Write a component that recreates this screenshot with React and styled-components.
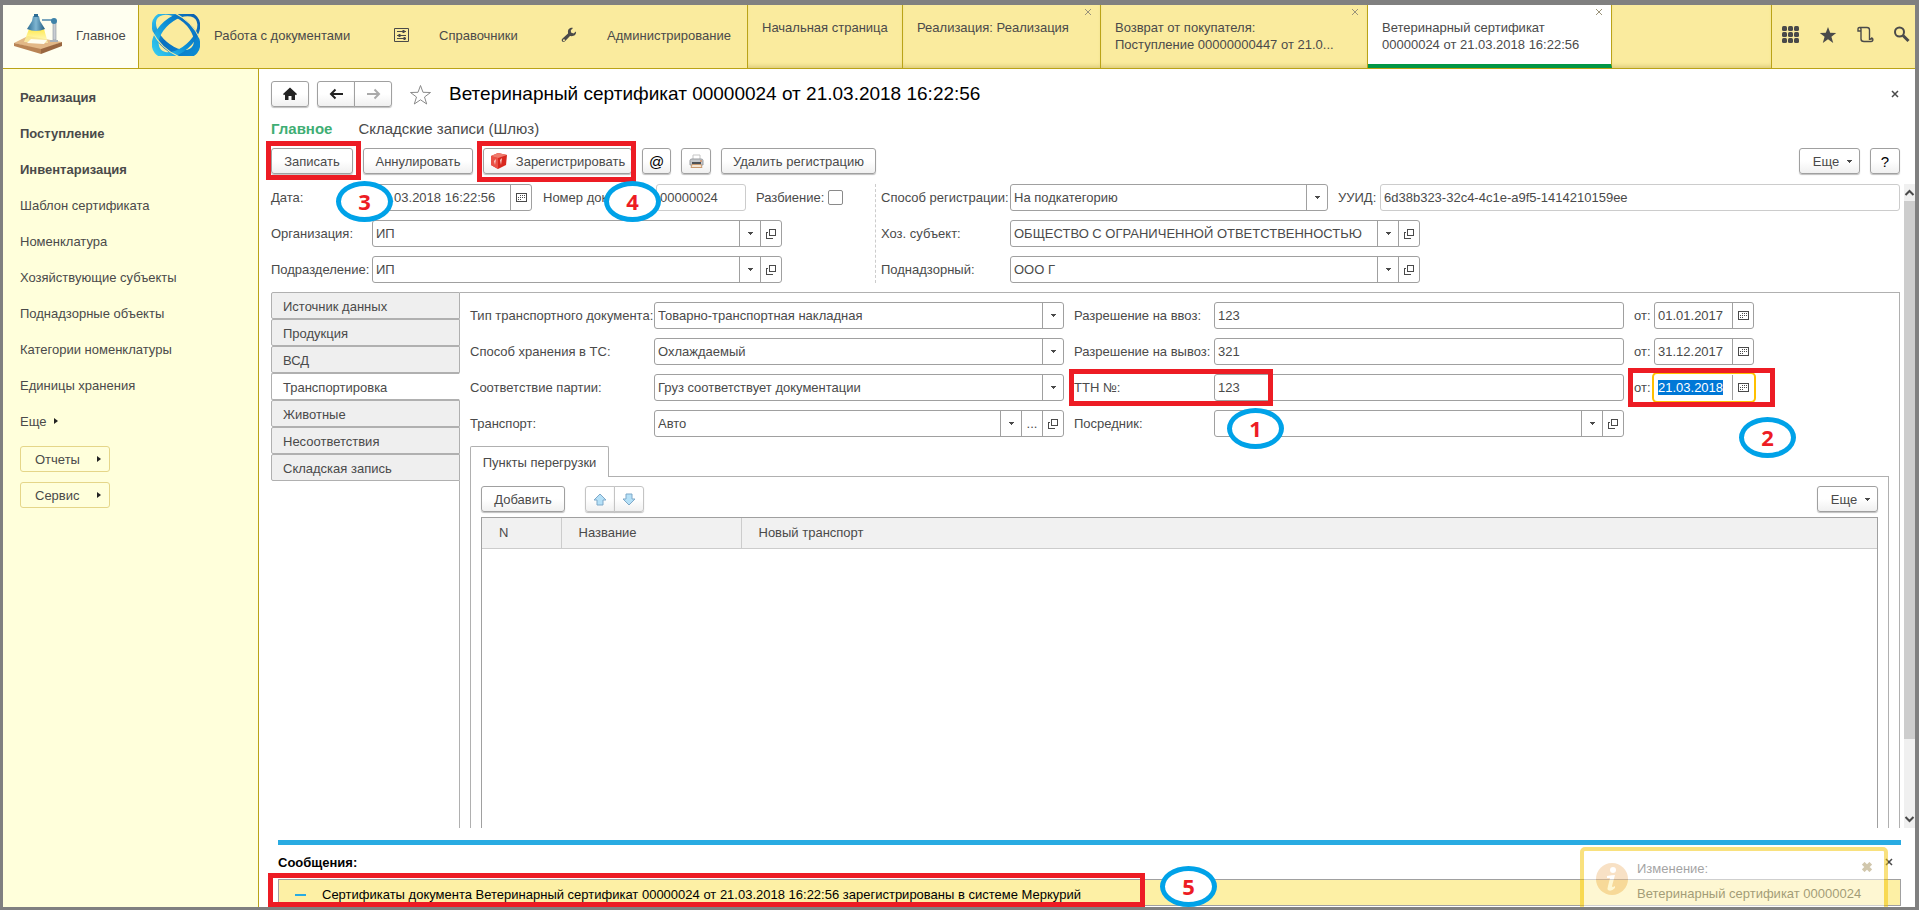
import React, { useEffect, useRef } from "react";
import styled, { createGlobalStyle, css } from "styled-components";

const sections = ["Реализация", "Поступление", "Инвентаризация"];

const links = [
  "Шаблон сертификата",
  "Номенклатура",
  "Хозяйствующие субъекты",
  "Поднадзорные объекты",
  "Категории номенклатуры",
  "Единицы хранения",
];

const docTabs = [
  { id: 1, lines: ["Начальная страница"], width: 155 },
  { id: 2, lines: ["Реализация: Реализация"], width: 198, closable: true },
  {
    id: 3,
    lines: ["Возврат от покупателя:", "Поступление 00000000447 от 21.0..."],
    width: 267,
    closable: true,
  },
  {
    id: 4,
    lines: ["Ветеринарный сертификат", "00000024 от 21.03.2018 16:22:56"],
    width: 244,
    closable: true,
    active: true,
  },
];

const sideTabs = [
  "Источник данных",
  "Продукция",
  "ВСД",
  "Транспортировка",
  "Животные",
  "Несоответствия",
  "Складская запись",
];

/* ---------- icons ---------- */

const LampIcon = () => (
  <svg width="50" height="42" viewBox="0 0 50 42">
    <defs>
      <linearGradient id="light" x1="0" y1="0" x2="0" y2="1">
        <stop offset="0" stopColor="#ffe94a" />
        <stop offset="1" stopColor="#fff8b8" stopOpacity="0.7" />
      </linearGradient>
      <linearGradient id="shade" x1="0" y1="0" x2="1" y2="0">
        <stop offset="0" stopColor="#2c6c93" />
        <stop offset="0.5" stopColor="#7fb6d2" />
        <stop offset="1" stopColor="#1f5a80" />
      </linearGradient>
    </defs>
    <path d="M1 29 L15 22 L49 28 L28 36 Z" fill="#e2b887" />
    <path d="M1 29 L28 35 L28 40 L1 32 Z" fill="#b98455" />
    <path d="M28 35 L49 28 L49 32 L28 40 Z" fill="#9a6740" />
    <path d="M40 8 h3 v18 h-3 z" fill="#c9ced3" stroke="#8c949b" strokeWidth="0.6" />
    <path d="M37 26 h8 v2 h-8 z" fill="#aab1b8" />
    <path d="M29 6 L41 6" stroke="#7aa5bd" strokeWidth="2" />
    <path d="M16 15 L31 15 L35 29 L11 28 Z" fill="url(#light)" />
    <path d="M18 25 L34 26 L31 30 L14 29 Z" fill="#fffef0" />
    <path d="M20 2 h6 l1 5 l5 8 q-9 4 -18 0 l5 -8 z" fill="url(#shade)" />
    <path d="M21 0 h4 v3 h-4 z" fill="#2c6c93" />
    <circle cx="41" cy="7" r="3" fill="#3d83a9" />
  </svg>
);

const OrbitLogo = () => (
  <svg width="48" height="42" viewBox="0 0 48 42">
    <defs>
      <linearGradient id="orbit" x1="0" y1="0" x2="1" y2="0">
        <stop offset="0" stopColor="#2fc0ee" />
        <stop offset="0.4" stopColor="#0a6fc0" />
        <stop offset="1" stopColor="#0b8ad2" />
      </linearGradient>
      <linearGradient id="orbitBack" x1="0" y1="0" x2="1" y2="0">
        <stop offset="0" stopColor="#35c9ee" />
        <stop offset="0.5" stopColor="#0b8fd6" />
        <stop offset="1" stopColor="#0a5fb0" />
      </linearGradient>
    </defs>
    <path
      d="M-28 0 A28 18 0 1 1 28 0 A28 18 0 1 1 -28 0 Z M-25 -1 A22 12 0 1 0 20 -1 A22 13 0 1 0 -25 -1 Z"
      transform="translate(24 21) rotate(41)"
      fill="url(#orbit)"
      fillRule="evenodd"
    />
    <path
      d="M-28 0 A28 18 0 1 1 28 0 A28 18 0 1 1 -28 0 Z M-21 1 A22 12 0 1 0 25 1 A22 13 0 1 0 -21 1 Z"
      transform="translate(24 21) rotate(-41)"
      fill="url(#orbitBack)"
      fillRule="evenodd"
    />
    <path
      d="M-20 -14 Q0 -22 20 -13 M-20 13 Q0 21 20 13"
      transform="translate(24 21) rotate(41)"
      fill="none"
      stroke="#faeb9e"
    />
  </svg>
);

const SlidersIcon = () => (
  <svg width="15" height="14" viewBox="0 0 15 14" fill="none" stroke="#4a4a4a">
    <path d="M.5 .5h14v13h-14z M3 3.500h9 M3 7.500h9 M3 10.500h9" />
    <path d="M9.500 2v3 M5.500 6v3 M10.500 9v3" strokeWidth="2" />
  </svg>
);

const WrenchIcon = () => (
  <svg width="16" height="16" viewBox="0 0 16 16">
    <path
      d="M15 4.500 L12.500 6.500 L10 5.500 L9.800 3.200 L12 1 C9.500 .3 6.500 2 7 5.500 L7 6.500 L1 12 C0 13.500 1.500 15.800 3.500 14.800 L9 9 C12.500 9.700 15.500 8 15 4.500 Z M3 12.200 a1 1 0 1 1 -.1 0z"
      fill="#4a4a4a"
      fillRule="evenodd"
    />
  </svg>
);

const GridIcon = () => (
  <svg width="18" height="18" viewBox="0 0 18 18" fill="#4a4a4a">
    {[0, 6, 12].map((y) =>
      [0, 6, 12].map((x) => <rect key={`${x}-${y}`} x={x} y={y} width="5" height="5" rx="1.500" />)
    )}
  </svg>
);

const StarIcon = () => (
  <svg width="18" height="18" viewBox="0 0 18 18">
    <path d="M9 1l2.200 5.800 6 .2-4.800 3.700L14.200 17 9 13.300 3.800 17l1.800-6.300L.8 7l6-.2z" fill="#4a4a4a" />
  </svg>
);

const ScrollIcon = () => (
  <svg width="17" height="17" viewBox="0 0 17 17" fill="none" stroke="#4a4a4a" strokeWidth="1.400">
    <path d="M3.500 5 H1 V3 C1 1 4 1 4 3 V13 C4 15 5 15.500 7 15.500 H14 C16.500 15.500 16.500 12 14 12 M2.500 1.500 H10 C12 1.500 12.500 3 12.500 4 V14 M14 12 V14" />
  </svg>
);

const SearchIcon = () => (
  <svg width="17" height="17" viewBox="0 0 17 17" fill="none" stroke="#4a4a4a">
    <circle cx="6.500" cy="6" r="4.500" strokeWidth="2" />
    <path d="M10 9.500 L15.500 15" strokeWidth="3" />
  </svg>
);

const HomeIcon = () => (
  <svg width="16" height="14" viewBox="0 0 16 14">
    <path d="M8 0.500 L15 7 L14 8.200 L13 7.500 V13 H9.500 V9 H6.500 V13 H3 V7.500 L2 8.200 L1 7 Z" fill="#222" />
  </svg>
);

const ArrowIcon = ({ flip, color }) => (
  <svg width="15" height="12" viewBox="0 0 15 12">
    <path
      d={flip ? "M1 6 H13 M8.500 1.500 L13 6 L8.500 10.500" : "M14 6 H2 M6.500 1.500 L2 6 L6.500 10.500"}
      fill="none"
      stroke={color}
      strokeWidth="2"
    />
  </svg>
);

const FavouriteIcon = () => (
  <svg width="23" height="21" viewBox="0 0 23 21">
    <path
      d="M11.500 1.500l2.500 6.800 7.500.2-6 4.500 2.200 7-6.200-4.200L5.300 20l2.200-7-6-4.500 7.500-.2z"
      fill="none"
      stroke="#8a8a8a"
    />
  </svg>
);

const CubeIcon = () => (
  <svg width="18" height="17" viewBox="0 0 18 17">
    <path d="M1 3 L8 0 L17 2 L16 12 L8 16 L1 12 Z" fill="#d8281e" />
    <path d="M1 3 L8 5 L8 16 L1 12 Z" fill="#ea5146" />
    <path d="M1 3 L8 0 L17 2 L8 5 Z" fill="#f07a6c" />
    <path d="M10 7 L12 5 L11 12 Z M4 8 L6 6 L5 12 Z" fill="#fbd0c8" />
  </svg>
);

const PrinterIcon = () => (
  <svg width="15" height="15" viewBox="0 0 15 15">
    <path d="M4 1h7v6H4z" fill="#fff" stroke="#c5c5c5" />
    <path d="M1 6.500 Q1 5 3 5 h9 Q14 5 14 6.500 V11 H1z" fill="#c6c8cb" stroke="#9a9da1" />
    <path d="M3 8h9v2H3z" fill="#4e5257" />
    <path d="M3 10.500h9l1 3H2z" fill="#f5e6d4" stroke="#c99a70" />
    <path d="M11 6.500h2v1h-2z" fill="#e07a3b" />
  </svg>
);

const CalendarIcon = () => (
  <svg width="11" height="9" viewBox="0 0 11 9" shapeRendering="crispEdges">
    <path d="M.5 .5h10v8h-10z" fill="none" stroke="#4a4a4a" />
    <path
      d="M4 2h1v1H4zM6 2h1v1H6zM8 2h1v1H8zM2 4h1v1H2zM4 4h1v1H4zM6 4h1v1H6zM8 4h1v1H8zM2 6h1v1H2zM4 6h1v1H4z"
      fill="#4a4a4a"
    />
  </svg>
);

const OpenIcon = () => (
  <svg width="10" height="10" viewBox="0 0 10 10" fill="none" stroke="#4a4a4a" shapeRendering="crispEdges">
    <path d="M3.500 .5h6v6h-6z M1.500 3.500h-1v6h6v-1" />
  </svg>
);

const CaretIcon = () => (
  <svg width="5" height="3" viewBox="0 0 5 3" shapeRendering="crispEdges">
    <path d="M0 0h5v1H4v1H3v1H2V2H1V1H0z" fill="#4a4a4a" />
  </svg>
);

const CaretRightIcon = () => (
  <svg width="4" height="6" viewBox="0 0 4 6">
    <path d="M0 0l4 3-4 3z" fill="#222" />
  </svg>
);

const CloseIcon = ({ size = 8, color = "#4a4a4a", weight = 1.5 }) => (
  <svg width={size} height={size} viewBox="0 0 8 8">
    <path d="M1 1l6 6M7 1L1 7" stroke={color} strokeWidth={weight} fill="none" />
  </svg>
);

const MoveIcon = ({ down }) => (
  <svg width="14" height="13" viewBox="0 0 14 13">
    <path
      d={down ? "M4 1h6v5h3L7 12 1 6h3z" : "M4 12h6V7h3L7 1 1 7h3z"}
      fill="#b5e0f7"
      stroke="#7fa9c9"
    />
  </svg>
);

const ChevronIcon = ({ down }) => (
  <svg width="11" height="7" viewBox="0 0 11 7">
    <path d={down ? "M1.500 1l4 4 4-4" : "M1.500 6l4-4 4 4"} stroke="#4a4a4a" strokeWidth="2" fill="none" />
  </svg>
);

const InfoIcon = () => (
  <svg width="32" height="32" viewBox="0 0 32 32">
    <circle cx="16" cy="16" r="16" fill="#f3c48c" />
    <circle cx="17" cy="7" r="3" fill="#fff" />
    <path d="M11 13q5-1 8-1l-3 11q0 2 3 0v2q-4 4-7 2-1-1 0-4l2-8h-3z" fill="#fff" />
  </svg>
);

/* ---------- form parts ---------- */

const SelectField = ({ id, value, buttons = [] }) => (
  <Field>
    <SelectWrap>
      <Select id={id} defaultValue={value}>
        <option>{value}</option>
      </Select>
      <SelectArrow>
        <CaretIcon />
      </SelectArrow>
    </SelectWrap>
    {buttons.includes("choose") && (
      <FieldButton type="button" aria-label="Выбрать">
        ...
      </FieldButton>
    )}
    {buttons.includes("open") && (
      <FieldButton type="button" aria-label="Открыть">
        <OpenIcon />
      </FieldButton>
    )}
  </Field>
);

const DateField = ({ id, value, focused }) => {
  const input = useRef(null);

  useEffect(() => {
    if (focused && input.current) {
      input.current.focus();
      input.current.select();
    }
  }, [focused]);

  return (
    <Field $focused={focused}>
      <TextInput id={id} ref={input} defaultValue={value} />
      <FieldButton type="button" aria-label="Календарь">
        <CalendarIcon />
      </FieldButton>
    </Field>
  );
};

const App = () => {
  return (
    <>
      <GlobalStyle />
      <Window>
        <Header>
          <HomeSection href="#main">
            <LampIcon />
            Главное
          </HomeSection>
          <SectionNav>
            <SectionLink href="#docs" $width={242} $gap={14}>
              <OrbitLogo />
              Работа с документами
            </SectionLink>
            <SectionLink href="#catalogs" $width={167} $gap={30}>
              <SlidersIcon />
              Справочники
            </SectionLink>
            <SectionLink href="#admin" $width={173} $gap={30}>
              <WrenchIcon />
              Администрирование
            </SectionLink>
          </SectionNav>
          {docTabs.map((tab) => (
            <DocTab key={tab.id} $width={tab.width} $active={tab.active}>
              {tab.lines.map((line) => (
                <span key={line}>{line}</span>
              ))}
              {tab.closable && (
                <TabClose type="button" aria-label="Закрыть">
                  <CloseIcon color="#9a937a" weight={1} />
                </TabClose>
              )}
            </DocTab>
          ))}
          <TabFiller />
          <HeaderTools>
            <PlainButton type="button" aria-label="Меню">
              <GridIcon />
            </PlainButton>
            <PlainButton type="button" aria-label="Избранное">
              <StarIcon />
            </PlainButton>
            <PlainButton type="button" aria-label="История">
              <ScrollIcon />
            </PlainButton>
            <PlainButton type="button" aria-label="Поиск">
              <SearchIcon />
            </PlainButton>
          </HeaderTools>
        </Header>

        <Body>
          <Sidebar>
            {sections.map((item) => (
              <SideLink key={item} href="#section" $bold>
                {item}
              </SideLink>
            ))}
            {links.map((item) => (
              <SideLink key={item} href="#link">
                {item}
              </SideLink>
            ))}
            <SideLink href="#more">
              Еще <CaretRightIcon />
            </SideLink>
            <SideButton type="button">
              Отчеты <CaretRightIcon />
            </SideButton>
            <SideButton type="button">
              Сервис <CaretRightIcon />
            </SideButton>
          </Sidebar>

          <Main>
            <TitleRow>
              <Button type="button" $width={38} aria-label="Домой">
                <HomeIcon />
              </Button>
              <ButtonGroup>
                <Button type="button" $width={38} aria-label="Назад">
                  <ArrowIcon color="#222" />
                </Button>
                <Button type="button" $width={38} aria-label="Вперед">
                  <ArrowIcon color="#aaa" flip />
                </Button>
              </ButtonGroup>
              <PlainButton type="button" aria-label="В избранное">
                <FavouriteIcon />
              </PlainButton>
              <Title>Ветеринарный сертификат 00000024 от 21.03.2018 16:22:56</Title>
              <PlainButton type="button" aria-label="Закрыть форму">
                <CloseIcon />
              </PlainButton>
            </TitleRow>

            <FormNav>
              <FormNavLink href="#form" $active>
                Главное
              </FormNavLink>
              <FormNavLink href="#stock">Складские записи (Шлюз)</FormNavLink>
            </FormNav>

            <Toolbar>
              <Anchor>
                <Button type="button" $width={82}>
                  Записать
                </Button>
                <RedFrame $top={-7} $left={-5} $right={-8} $bottom={-5} />
              </Anchor>
              <Button type="button" $width={110}>
                Аннулировать
              </Button>
              <Anchor>
                <Button type="button" $width={149}>
                  <CubeIcon />
                  Зарегистрировать
                </Button>
                <RedFrame $top={-7} $left={-6} $right={-4} $bottom={-7} />
              </Anchor>
              <Button type="button" $width={29} $dark>
                @
              </Button>
              <Button type="button" $width={30} aria-label="Печать">
                <PrinterIcon />
              </Button>
              <Button type="button" $width={155}>
                Удалить регистрацию
              </Button>
              <Spacer />
              <Button type="button" $width={61} $menu>
                Еще <CaretIcon />
              </Button>
              <Button type="button" $width={30} $dark>
                ?
              </Button>
            </Toolbar>

            <ScrollArea>
              <Form>
                <DocFields>
                  <LeftFields>
                    <FieldRow>
                      <Label htmlFor="date" $width={101}>
                        Дата:
                      </Label>
                      <Sized $width={160}>
                        <DateField id="date" value="21.03.2018 16:22:56" />
                        <Badge $left={-36} $top={-3}>
                          3
                        </Badge>
                      </Sized>
                      <Label htmlFor="number" $width={113} $indent={11}>
                        Номер документа:
                      </Label>
                      <Sized $width={90}>
                        <Field $readOnly>
                          <TextInput id="number" defaultValue="00000024" readOnly />
                        </Field>
                        <Badge $left={-52} $top={-3}>
                          4
                        </Badge>
                      </Sized>
                      <Label htmlFor="split" $width={72} $indent={10}>
                        Разбиение:
                      </Label>
                      <Checkbox id="split" type="checkbox" />
                    </FieldRow>
                    <FieldRow>
                      <Label htmlFor="org" $width={101}>
                        Организация:
                      </Label>
                      <Sized $width={410}>
                        <SelectField id="org" value="ИП" buttons={["open"]} />
                      </Sized>
                    </FieldRow>
                    <FieldRow>
                      <Label htmlFor="dept" $width={101}>
                        Подразделение:
                      </Label>
                      <Sized $width={410}>
                        <SelectField id="dept" value="ИП" buttons={["open"]} />
                      </Sized>
                    </FieldRow>
                  </LeftFields>
                  <RightFields>
                    <FieldRow>
                      <Label htmlFor="method" $width={129}>
                        Способ регистрации:
                      </Label>
                      <Sized $width={318}>
                        <SelectField id="method" value="На подкатегорию" />
                      </Sized>
                      <Label htmlFor="uuid" $width={42} $indent={10}>
                        УУИД:
                      </Label>
                      <Field $readOnly>
                        <TextInput id="uuid" defaultValue="6d38b323-32c4-4c1e-a9f5-1414210159ee" readOnly />
                      </Field>
                    </FieldRow>
                    <FieldRow>
                      <Label htmlFor="subject" $width={129}>
                        Хоз. субъект:
                      </Label>
                      <Sized $width={410}>
                        <SelectField
                          id="subject"
                          value="ОБЩЕСТВО С ОГРАНИЧЕННОЙ ОТВЕТСТВЕННОСТЬЮ"
                          buttons={["open"]}
                        />
                      </Sized>
                    </FieldRow>
                    <FieldRow>
                      <Label htmlFor="supervised" $width={129}>
                        Поднадзорный:
                      </Label>
                      <Sized $width={410}>
                        <SelectField id="supervised" value="ООО Г" buttons={["open"]} />
                      </Sized>
                    </FieldRow>
                  </RightFields>
                </DocFields>

                <Pages>
                  <SideTabs>
                    {sideTabs.map((tab) => (
                      <SideTab key={tab} type="button" $active={tab === "Транспортировка"}>
                        {tab}
                      </SideTab>
                    ))}
                    <SideTabsRest />
                  </SideTabs>
                  <Page>
                    <TransportGrid>
                      <Label htmlFor="doctype">Тип транспортного документа:</Label>
                      <SelectField id="doctype" value="Товарно-транспортная накладная" />
                      <Label htmlFor="import" $indent={10}>
                        Разрешение на ввоз:
                      </Label>
                      <Field>
                        <TextInput id="import" defaultValue="123" />
                      </Field>
                      <Label htmlFor="importDate" $indent={10}>
                        от:
                      </Label>
                      <DateField id="importDate" value="01.01.2017" />

                      <Label htmlFor="storage">Способ хранения в ТС:</Label>
                      <SelectField id="storage" value="Охлаждаемый" />
                      <Label htmlFor="export" $indent={10}>
                        Разрешение на вывоз:
                      </Label>
                      <Field>
                        <TextInput id="export" defaultValue="321" />
                      </Field>
                      <Label htmlFor="exportDate" $indent={10}>
                        от:
                      </Label>
                      <DateField id="exportDate" value="31.12.2017" />

                      <Label htmlFor="match">Соответствие партии:</Label>
                      <SelectField id="match" value="Груз соответствует документации" />
                      <Label htmlFor="ttn" $indent={10}>
                        ТТН №:
                      </Label>
                      <Anchor>
                        <Field>
                          <TextInput id="ttn" defaultValue="123" />
                        </Field>
                        <RedFrame $top={-5} $left={-145} $bottom={-5} $width={204} />
                      </Anchor>
                      <Label htmlFor="ttnDate" $indent={10}>
                        от:
                      </Label>
                      <Anchor>
                        <DateField id="ttnDate" value="21.03.2018" focused />
                        <RedFrame $top={-6} $left={-26} $right={-21} $bottom={-6} />
                        <Badge $left={85} $top={43}>
                          2
                        </Badge>
                      </Anchor>

                      <Label htmlFor="vehicle">Транспорт:</Label>
                      <SelectField id="vehicle" value="Авто" buttons={["choose", "open"]} />
                      <Label htmlFor="agent" $indent={10}>
                        Посредник:
                      </Label>
                      <Anchor>
                        <SelectField id="agent" value="" buttons={["open"]} />
                        <Badge $left={13} $top={-2}>
                          1
                        </Badge>
                      </Anchor>
                    </TransportGrid>

                    <InnerTabs>
                      <InnerTab type="button">Пункты перегрузки</InnerTab>
                      <InnerTabsRest />
                    </InnerTabs>
                    <InnerPage>
                      <TableTools>
                        <Button type="button" $width={84}>
                          Добавить
                        </Button>
                        <ButtonGroup $soft>
                          <Button type="button" $width={30} aria-label="Вверх">
                            <MoveIcon />
                          </Button>
                          <Button type="button" $width={30} aria-label="Вниз">
                            <MoveIcon down />
                          </Button>
                        </ButtonGroup>
                        <Spacer />
                        <Button type="button" $width={61} $menu>
                          Еще <CaretIcon />
                        </Button>
                      </TableTools>
                      <TableBox>
                        <Table>
                          <thead>
                            <tr>
                              <Th $width={79}>N</Th>
                              <Th $width={180}>Название</Th>
                              <Th>Новый транспорт</Th>
                            </tr>
                          </thead>
                        </Table>
                      </TableBox>
                    </InnerPage>
                  </Page>
                </Pages>
              </Form>
              <Scrollbar>
                <ScrollEnd>
                  <ChevronIcon />
                </ScrollEnd>
                <ScrollThumb />
                <ScrollTrack />
                <ScrollEnd>
                  <ChevronIcon down />
                </ScrollEnd>
              </Scrollbar>
            </ScrollArea>

            <Messages>
              <MessagesHead>
                Сообщения:
                <PlainButton type="button" aria-label="Закрыть сообщения">
                  <CloseIcon />
                </PlainButton>
              </MessagesHead>
              <Anchor>
                <Message>
                  <Dash />
                  Сертификаты документа Ветеринарный сертификат 00000024 от 21.03.2018 16:22:56 зарегистрированы в
                  системе Меркурий
                </Message>
                <RedFrame $top={-6} $left={-10} $bottom={-1} $width={877} />
                <Badge $left={882} $top={-13}>
                  5
                </Badge>
              </Anchor>
              <Toast>
                <InfoIcon />
                <ToastText>
                  <span>Изменение:</span>
                  <span>Ветеринарный сертификат 00000024</span>
                </ToastText>
                <PlainButton type="button" aria-label="Скрыть">
                  <CloseIcon size={10} color="#a5905c" weight={3} />
                </PlainButton>
              </Toast>
            </Messages>
          </Main>
        </Body>
      </Window>
    </>
  );
};

export default App;

const GlobalStyle = createGlobalStyle`
  * {
    box-sizing: border-box;
  }
  body {
    margin: 0;
    color: #4a4a4a;
    font-family: "Liberation Sans", Arial, sans-serif;
    font-size: 13px;
  }
  button, input, select {
    font: inherit;
    color: inherit;
  }
  a {
    color: inherit;
    text-decoration: none;
  }
  svg {
    flex: none;
    display: block;
  }
`;

const Window = styled.div`
  display: flex;
  flex-direction: column;
  height: 100vh;
  overflow: hidden;
  border: solid #808080;
  border-width: 5px 4px 3px 3px;
  background: #fff;
`;

const Header = styled.header`
  display: flex;
  height: 64px;
  background: #faeb9e;
  border-bottom: 1px solid #baa317;
`;

const HomeSection = styled.a`
  display: flex;
  align-items: center;
  gap: 13px;
  width: 136px;
  padding: 0 0 3px 10px;
  background: #fffff0;
  border-right: 1px solid #baa317;
`;

const SectionNav = styled.nav`
  display: flex;
  width: 609px;
  padding-left: 13px;
  border-right: 1px solid #baa317;
`;

const SectionLink = styled.a`
  display: flex;
  align-items: center;
  gap: ${({ $gap }) => $gap}px;
  width: ${({ $width }) => $width}px;
  padding-bottom: 3px;
  white-space: nowrap;
`;

const DocTab = styled.div`
  position: relative;
  display: flex;
  flex-direction: column;
  width: ${({ $width }) => $width}px;
  padding: 14px 0 0 14px;
  line-height: 17px;
  white-space: nowrap;
  border-right: 1px solid #baa317;
  box-shadow: inset 0 -4px 4px -2px #dccb78;
  ${({ $active }) =>
    $active &&
    css`
      background: #fff;
      border-bottom: 4px solid #009646;
      box-shadow: none;
    `}
`;

const PlainButton = styled.button`
  display: flex;
  padding: 0;
  border: 0;
  background: none;
`;

const TabClose = styled(PlainButton)`
  position: absolute;
  top: 3px;
  right: 8px;
`;

const TabFiller = styled.div`
  flex: 1;
  border-right: 1px solid #baa317;
  box-shadow: inset 0 -4px 4px -2px #dccb78;
`;

const HeaderTools = styled.div`
  display: flex;
  align-items: center;
  justify-content: space-between;
  width: 143px;
  padding: 0 5px 4px 10px;
`;

const Body = styled.div`
  display: flex;
  flex: 1;
  min-height: 0;
`;

const Sidebar = styled.nav`
  display: flex;
  flex-direction: column;
  align-items: flex-start;
  width: 256px;
  padding: 10px 17px;
  background: #ffffdb;
  border-right: 1px solid #baa317;
`;

const SideLink = styled.a`
  display: flex;
  align-items: center;
  gap: 8px;
  height: 36px;
  font-weight: ${({ $bold }) => ($bold ? "bold" : "normal")};
`;

const SideButton = styled.button`
  display: flex;
  align-items: center;
  justify-content: space-between;
  width: 90px;
  height: 26px;
  margin: 7px 0 3px;
  padding: 0 8px 0 14px;
  background: none;
  border: 1px solid #e5d689;
  border-radius: 3px;
`;

const Main = styled.main`
  display: flex;
  flex-direction: column;
  flex: 1;
  min-width: 0;
  padding: 12px 0 0 12px;
`;

const TitleRow = styled.div`
  display: flex;
  align-items: center;
  gap: 8px;
  height: 26px;
  padding-right: 16px;
  ${PlainButton}:nth-child(3) {
    margin: 0 9px;
  }
`;

const Button = styled.button`
  display: flex;
  align-items: center;
  justify-content: center;
  gap: 8px;
  width: ${({ $width }) => $width}px;
  height: 26px;
  padding: 0 0 0 ${({ $menu }) => ($menu ? 6 : 0)}px;
  color: ${({ $dark }) => ($dark ? "#000" : "#4a4a4a")};
  font-size: ${({ $dark }) => ($dark ? 15 : 13)}px;
  white-space: nowrap;
  background: linear-gradient(#fff 50%, #f0f0f0);
  border: 1px solid #a0a0a0;
  border-radius: 3px;
  box-shadow: 0 1px 1px #c0c0c0;
`;

const ButtonGroup = styled.div`
  display: flex;
  ${Button} {
    border-color: ${({ $soft }) => ($soft ? "#c4c4c4" : "#a0a0a0")};
  }
  ${Button}:first-child {
    border-radius: 3px 0 0 3px;
  }
  ${Button}:last-child {
    margin-left: -1px;
    border-radius: 0 3px 3px 0;
  }
`;

const Title = styled.h1`
  flex: 1;
  margin: 0;
  color: #000;
  font-size: 19px;
  font-weight: normal;
`;

const FormNav = styled.nav`
  display: flex;
  gap: 26px;
  height: 24px;
  margin: 10px 0 7px;
  line-height: 24px;
`;

const FormNavLink = styled.a`
  font-size: 15px;
  ${({ $active }) =>
    $active &&
    css`
      color: #3fae74;
      font-weight: bold;
    `}
`;

const Toolbar = styled.div`
  display: flex;
  gap: 10px;
  height: 27px;
  margin-bottom: 9px;
  padding-right: 15px;
`;

const Anchor = styled.div`
  position: relative;
`;

const RedFrame = styled.div`
  position: absolute;
  z-index: 2;
  top: ${({ $top }) => $top}px;
  left: ${({ $left }) => $left}px;
  right: ${({ $right }) => ($right === undefined ? "auto" : `${$right}px`)};
  bottom: ${({ $bottom }) => $bottom}px;
  width: ${({ $width }) => ($width ? `${$width}px` : "auto")};
  border: 5px solid #ed1c24;
  pointer-events: none;
`;

const Badge = styled.div`
  position: absolute;
  z-index: 3;
  top: ${({ $top }) => $top}px;
  left: ${({ $left }) => $left}px;
  width: 57px;
  height: 41px;
  color: #ed1c24;
  font-family: "Open Sans", sans-serif;
  font-size: 22px;
  font-weight: bold;
  line-height: 30px;
  text-align: center;
  background: #fff;
  border: 5px solid #00a2e8;
  border-radius: 50%;
`;

const Spacer = styled.div`
  flex: 1;
`;

const ScrollArea = styled.div`
  display: flex;
  flex: 1;
  min-height: 0;
`;

const Form = styled.form`
  display: flex;
  flex-direction: column;
  flex: 1;
  min-width: 0;
  margin-right: 4px;
`;

const DocFields = styled.div`
  display: flex;
`;

const LeftFields = styled.div`
  display: flex;
  flex-direction: column;
  gap: 9px;
  width: 605px;
  border-right: 1px dashed #ccc;
`;

const RightFields = styled.div`
  display: flex;
  flex-direction: column;
  flex: 1;
  gap: 9px;
  padding-left: 5px;
`;

const FieldRow = styled.div`
  display: flex;
  align-items: center;
`;

const Label = styled.label`
  align-self: center;
  flex: none;
  box-sizing: content-box;
  width: ${({ $width }) => ($width ? `${$width}px` : "auto")};
  padding-left: ${({ $indent }) => $indent || 0}px;
  white-space: nowrap;
`;

const Sized = styled.div`
  position: relative;
  width: ${({ $width }) => $width}px;
`;

const Field = styled.div`
  display: flex;
  flex: 1;
  min-width: 0;
  height: 27px;
  background: #fff;
  border: 1px solid ${({ $readOnly }) => ($readOnly ? "#ccc" : "#a0a0a0")};
  border-radius: 3px;
  ${({ $focused }) =>
    $focused &&
    css`
      border-color: transparent;
      box-shadow: 0 0 0 2px #ffc000;
    `}
`;

const TextInput = styled.input`
  flex: 1;
  min-width: 0;
  width: 100%;
  padding: 0 3px;
  background: none;
  border: 0;
  outline: 0;
  &::selection {
    color: #fff;
    background: #0078d7;
  }
`;

const SelectWrap = styled.div`
  position: relative;
  flex: 1;
  min-width: 0;
`;

const Select = styled.select`
  width: 100%;
  height: 100%;
  padding: 0 22px 0 3px;
  background: none;
  border: 0;
  outline: 0;
  appearance: none;
`;

const SelectArrow = styled.span`
  position: absolute;
  top: 0;
  right: 0;
  bottom: 0;
  display: flex;
  align-items: center;
  justify-content: center;
  width: 21px;
  border-left: 1px solid #a0a0a0;
  pointer-events: none;
`;

const FieldButton = styled.button`
  display: flex;
  flex: none;
  align-items: center;
  justify-content: center;
  width: 21px;
  padding: 0;
  background: none;
  border: 0;
  border-left: 1px solid #a0a0a0;
`;

const Checkbox = styled.input`
  width: 15px;
  height: 15px;
  margin: 0;
  appearance: none;
  background: #fff;
  border: 1px solid #8a8a8a;
  border-radius: 2px;
`;

const Pages = styled.div`
  display: flex;
  flex: 1;
  min-height: 0;
  margin-top: 9px;
`;

const SideTabs = styled.div`
  display: flex;
  flex-direction: column;
  width: 189px;
`;

const SideTab = styled.button`
  flex: none;
  height: 27px;
  padding: 1px 0 0 11px;
  text-align: left;
  background: ${({ $active }) => ($active ? "#fff" : "#efefef")};
  border: 1px solid #b0b0b0;
  border-right-color: ${({ $active }) => ($active ? "#fff" : "#b0b0b0")};
  border-radius: 2px 0 0 2px;
`;

const SideTabsRest = styled.div`
  flex: 1;
  border-right: 1px solid #b0b0b0;
`;

const Page = styled.div`
  display: flex;
  flex: 1;
  flex-direction: column;
  min-width: 0;
  padding: 9px 10px 0;
  border: solid #b0b0b0;
  border-width: 1px 1px 0 0;
`;

const TransportGrid = styled.div`
  display: grid;
  grid-template-columns: 184px minmax(0, 410px) 150px minmax(0, 410px) 30px 100px;
  gap: 9px 0;
`;

const InnerTabs = styled.div`
  display: flex;
  margin-top: 9px;
`;

const InnerTab = styled.button`
  width: 139px;
  height: 31px;
  padding: 1px 0 0;
  background: #fff;
  border: solid #b0b0b0;
  border-width: 1px 1px 0;
  border-radius: 2px 2px 0 0;
`;

const InnerTabsRest = styled.div`
  flex: 1;
  border-bottom: 1px solid #b0b0b0;
`;

const InnerPage = styled.div`
  display: flex;
  flex: 1;
  flex-direction: column;
  padding: 9px 10px 0;
  border: solid #b0b0b0;
  border-width: 0 1px;
`;

const TableTools = styled.div`
  display: flex;
  margin-bottom: 5px;
  ${ButtonGroup} {
    margin-left: 20px;
  }
`;

const TableBox = styled.div`
  flex: 1;
  border: solid #a0a0a0;
  border-width: 1px 1px 0;
`;

const Table = styled.table`
  width: 100%;
  table-layout: fixed;
  border-collapse: collapse;
`;

const Th = styled.th`
  width: ${({ $width }) => ($width ? `${$width}px` : "auto")};
  height: 30px;
  padding: 0 0 0 17px;
  font-weight: normal;
  text-align: left;
  background: #f1f1f1;
  border-bottom: 1px solid #ccc;
  & + & {
    border-left: 1px solid #ccc;
  }
`;

const Scrollbar = styled.div`
  display: flex;
  flex-direction: column;
  width: 11px;
  overflow: hidden;
`;

const ScrollEnd = styled.div`
  display: flex;
  align-items: center;
  justify-content: center;
  height: 17px;
  background: #f0f0f0;
`;

const ScrollThumb = styled.div`
  flex: 15;
  background: #cdcdcd;
`;

const ScrollTrack = styled.div`
  flex: 2;
  background: #f0f0f0;
`;

const Messages = styled.section`
  position: relative;
  margin: 12px 14px 1px 7px;
  color: #000;
  border-top: 5px solid #29abe2;
`;

const MessagesHead = styled.div`
  display: flex;
  align-items: center;
  justify-content: space-between;
  height: 34px;
  padding-right: 8px;
  font-weight: bold;
`;

const Message = styled.div`
  display: flex;
  align-items: center;
  gap: 16px;
  height: 27px;
  padding: 4px 16px 0;
  background: #fdf0a5;
  border: 1px solid #a0a0a0;
`;

const Dash = styled.span`
  width: 11px;
  height: 2px;
  background: #29abe2;
`;

const Toast = styled.aside`
  position: absolute;
  z-index: 4;
  top: 2px;
  right: 13px;
  display: flex;
  gap: 9px;
  width: 308px;
  height: 70px;
  padding: 12px;
  color: #000;
  background: #fff;
  border: 4px solid #f5c400;
  border-radius: 5px;
  opacity: 0.5;
  ${PlainButton} {
    position: absolute;
    top: 11px;
    right: 12px;
  }
`;

const ToastText = styled.div`
  display: flex;
  flex-direction: column;
  color: #4a4a4a;
  line-height: 25px;
  margin-top: -7px;
  white-space: nowrap;
`;
